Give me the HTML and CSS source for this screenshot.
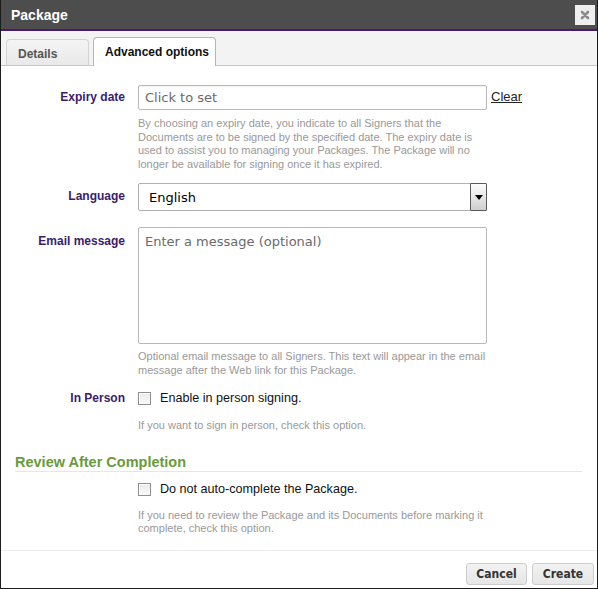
FILE: index.html
```html
<!DOCTYPE html>
<html>
<head>
<meta charset="utf-8">
<link rel="stylesheet" href="styles.css">
</head>
<body>
<div class="dialog">
  <div class="titlebar">
    <span class="title">Package</span>
    <span class="close"><svg width="10" height="10" viewBox="0 0 10 10"><path d="M2 2 L8 8 M8 2 L2 8" stroke="#8c8c8c" stroke-width="2.6" stroke-linecap="round"/></svg></span>
  </div>
  <div class="tabs">
    <div class="tab">Details</div>
    <div class="tab active">Advanced options</div>
  </div>
  <div class="body">
    <div class="row r-expiry">
      <label class="lbl">Expiry date</label>
      <div class="field">
        <div class="line">
          <div class="input placeholder">Click to set</div>
          <a class="clear">Clear</a>
        </div>
        <p class="help h-expiry">By choosing an expiry date, you indicate to all Signers that the Documents are to be signed by the specified date. The expiry date is used to assist you to managing your Packages. The Package will no longer be available for signing once it has expired.</p>
      </div>
    </div>
    <div class="row r-lang">
      <label class="lbl">Language</label>
      <div class="field">
        <div class="select"><span class="sel-text">English</span><span class="arrow"><svg width="8" height="5" viewBox="0 0 8 5"><path d="M0 0 H8 L4 5 Z" fill="#000"/></svg></span></div>
      </div>
    </div>
    <div class="row r-email">
      <label class="lbl">Email message</label>
      <div class="field">
        <div class="textarea placeholder">Enter a message (optional)</div>
        <p class="help h-email">Optional email message to all Signers. This text will appear in the email message after the Web link for this Package.</p>
      </div>
    </div>
    <div class="row r-person">
      <label class="lbl lbl-check">In Person</label>
      <div class="field">
        <div class="check-line"><span class="checkbox"></span><span class="check-text">Enable in person signing.</span></div>
        <p class="help h-person">If you want to sign in person, check this option.</p>
      </div>
    </div>
    <h3 class="section">Review After Completion</h3>
    <div class="row r-review">
      <span class="lbl"></span>
      <div class="field">
        <div class="check-line"><span class="checkbox"></span><span class="check-text">Do not auto-complete the Package.</span></div>
        <p class="help h-review">If you need to review the Package and its Documents before marking it complete, check this option.</p>
      </div>
    </div>
  </div>
  <div class="footer">
    <button class="btn btn-cancel">Cancel</button>
    <button class="btn btn-create">Create</button>
  </div>
</div>
</body>
</html>
```

FILE: styles.css
```css
html, body {
  margin: 0;
  padding: 0;
  background: #fff;
}

.dialog {
  width: 598px;
  height: 589px;
  box-sizing: border-box;
  border: 1px solid #1c1c1c;
  border-top: none;
  display: flex;
  flex-direction: column;
  background: #fff;
  font-family: "Liberation Sans", Arial, sans-serif;
  overflow: hidden;
}

.titlebar {
  height: 29px;
  background: #4d4d4d;
  border-bottom: 2px solid #4a1a6c;
  display: flex;
  align-items: center;
  justify-content: space-between;
  padding: 0 2px 0 10px;
  flex: none;
}

.title {
  color: #fff;
  font-weight: bold;
  font-size: 14px;
  margin-top: 1px;
}

.close {
  width: 20px;
  height: 20px;
  background: #efefef;
  display: flex;
  align-items: center;
  justify-content: center;
  margin-top: 1px;
}

.tabs {
  height: 34px;
  background: #f3f3f3;
  border-bottom: 1px solid #c8c8c8;
  display: flex;
  align-items: flex-end;
  padding-left: 5px;
  gap: 4px;
  flex: none;
}

.tab {
  height: 26px;
  box-sizing: border-box;
  width: 83px;
  border: 1px solid #d3d3d3;
  border-bottom: none;
  border-radius: 4px 4px 0 0;
  background: linear-gradient(#f4f4f4, #e9e9e9);
  color: #555;
  font-weight: bold;
  font-size: 12px;
  padding: 7px 0 0 11px;
}

.tab.active {
  width: 123px;
  height: 29px;
  margin-bottom: -1px;
  background: #fff;
  border-color: #b5b5b5;
  color: #111;
  padding: 7px 0 0 11px;
}

.body {
  flex: 1;
  padding-top: 19px;
}

.row {
  display: grid;
  grid-template-columns: 124px 450px;
  column-gap: 13px;
}

.lbl {
  text-align: right;
  color: #3b1c6c;
  font-weight: bold;
  font-size: 12px;
  line-height: 25px;
}

.line {
  display: flex;
  align-items: center;
  gap: 4px;
}

.input {
  flex: none;
  width: 349px;
  height: 25px;
  box-sizing: border-box;
  border: 1px solid #b9b9b9;
  border-radius: 2px;
  box-shadow: inset 0 1px 2px rgba(0,0,0,0.06);
  font-family: "DejaVu Sans", Verdana, sans-serif;
  font-size: 13px;
  line-height: 23px;
  padding-left: 6px;
}

.placeholder {
  color: #6a6a6a;
}

.clear {
  color: #222;
  text-decoration: underline;
  font-size: 13px;
  margin-top: -3px;
}

.help {
  margin: 0;
  width: 350px;
  color: #999;
  font-size: 11px;
  line-height: 13.5px;
}

.h-expiry { margin-top: 7px; }

.r-lang { margin-top: 12px; }
.r-lang .lbl { line-height: 27px; }

.select {
  width: 349px;
  height: 28px;
  box-sizing: border-box;
  border: 1px solid #b0b0b0;
  border-radius: 2px;
  display: flex;
  align-items: center;
  justify-content: space-between;
}

.sel-text {
  font-family: "DejaVu Sans", Verdana, sans-serif;
  font-size: 13px;
  color: #000;
  padding-left: 10px;
}

.arrow {
  width: 17px;
  height: 28px;
  box-sizing: border-box;
  margin-right: -1px;
  border: 1px solid #5a5a5a;
  border-radius: 1px;
  background: linear-gradient(#fdfdfd, #cfcfcf);
  display: flex;
  align-items: center;
  justify-content: center;
}

.r-email { margin-top: 16px; }
.r-email .lbl { line-height: 28px; }

.textarea {
  width: 349px;
  height: 117px;
  box-sizing: border-box;
  border: 1px solid #b9b9b9;
  border-radius: 2px;
  font-family: "DejaVu Sans", Verdana, sans-serif;
  font-size: 13px;
  padding: 6px 0 0 6px;
}

.h-email { margin-top: 6px; }

.r-person { margin-top: 11px; }

.lbl-check { line-height: 20px; }

.check-line {
  display: flex;
  align-items: center;
  height: 20px;
}

.checkbox {
  width: 13px;
  height: 13px;
  box-sizing: border-box;
  border: 1px solid #8f8f8f;
  background: linear-gradient(#eaeaea, #fafafa);
  box-shadow: inset 1px 1px 0 #fff;
  margin-right: 9px;
  margin-top: 1px;
}

.check-text {
  font-size: 12.6px;
  color: #111;
}

.h-person { margin-top: 11px; }

.section {
  margin: 20px 15px 0 14px;
  padding: 0;
  height: 18px;
  line-height: 18px;
  font-size: 14.5px;
  font-weight: bold;
  color: #6a9a3c;
  border-bottom: 1px solid #e6e6e6;
}

.r-review { margin-top: 7px; }

.h-review { margin-top: 10px; }

.footer {
  flex: none;
  border-top: 1px solid #ededed;
  padding: 12px 3px 3px 0;
  display: flex;
  justify-content: flex-end;
  gap: 5px;
}

.btn {
  height: 22px;
  box-sizing: border-box;
  border: 1px solid #cdcdcd;
  border-radius: 3px;
  background: linear-gradient(#f2f2f2, #e6e6e6);
  font-family: "DejaVu Sans Condensed", Tahoma, sans-serif;
  font-weight: bold;
  font-size: 12px;
  color: #333;
  padding: 0;
}

.btn-cancel { width: 61px; }
.btn-create { width: 62px; }
```
